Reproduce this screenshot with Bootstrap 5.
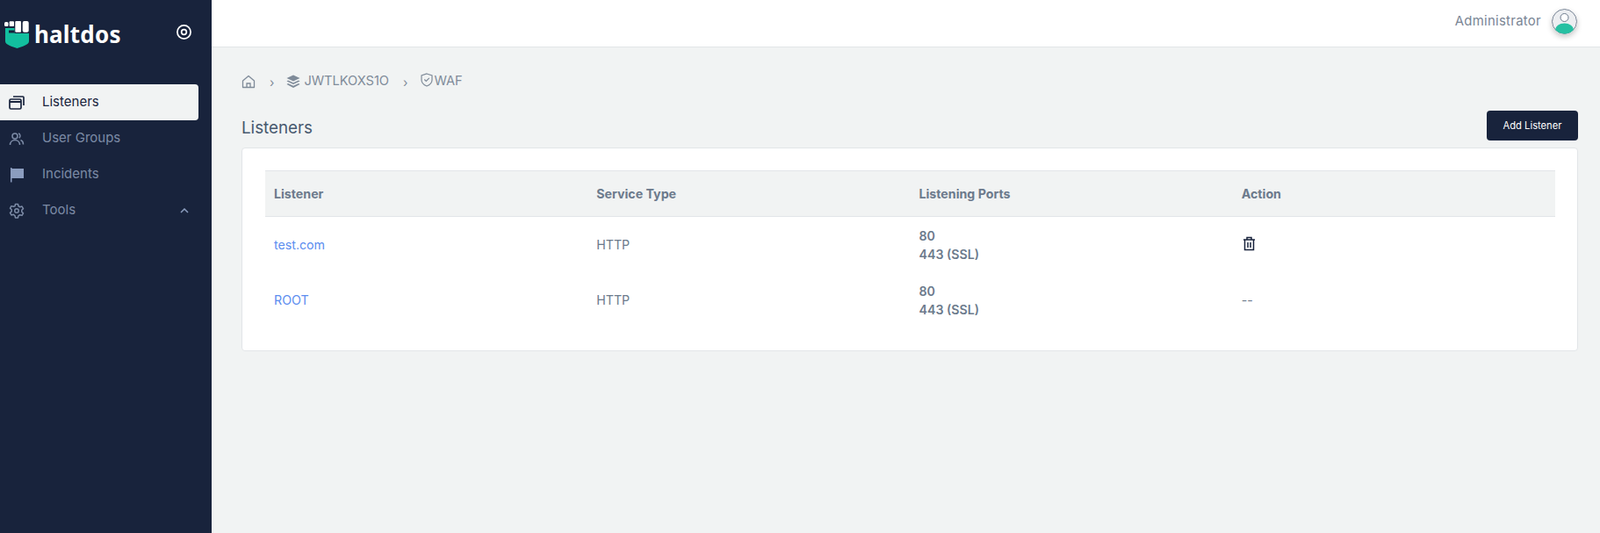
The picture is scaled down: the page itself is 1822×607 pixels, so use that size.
<!DOCTYPE html>
<html lang="en">
<head>
<meta charset="utf-8">
<title>Listeners</title>
<link href="https://cdn.jsdelivr.net/npm/bootstrap@5.3.0/dist/css/bootstrap.min.css" rel="stylesheet">
<style>
html,body{height:100%}
body{font-family:"Inter","Noto Sans",sans-serif;font-size:14.2px;background:#f1f3f3;color:#6c7a8c;overflow:hidden}
.shell{height:607px}
.side{width:241px;background:#18233c;flex:none}
.brand{height:96px;padding:23px 22px 0 5px}
.brand-name{font-family:"Noto Sans",sans-serif;font-weight:700;font-size:26px;line-height:32px;color:#fff;margin-left:5px;letter-spacing:.2px}
.side-item{height:41px;width:226px;padding-left:10px;color:#7c8ba6;font-size:15px;text-decoration:none;border-radius:0 4px 4px 0}
.side-item.on{background:#f1f3f3;color:#18233c}
.side-ico{width:18px;margin-right:20px;flex:none}
.caret-up{margin-right:11px}
.topline{height:54px;background:#fff;border-bottom:1px solid #e2e5e8;padding:0 26px 4px 0}
.admin{font-size:14.9px;color:#7a8594;margin:0 12px 0 0;letter-spacing:.3px}
.avatar{border-radius:50%;box-shadow:0 3px 6px rgba(0,0,0,.22)}
.pagearea{padding:0 25px 0 34px}
.crumbs{height:37px;margin-top:20px;font-size:14.6px;color:#7f8b99;padding-top:1px}
.crumb-sep{margin:0 14px 0 16px;font-size:14px}
.heading-row{margin-top:15px;height:42px}
.page-title{font-size:18.8px;color:#48596f;font-weight:400;margin:7px 0 0;line-height:25px}
.btn-add{background:#18233c;color:#fff;font-size:11.2px;border-radius:4px;width:104px;height:34px;padding:0;border:0}
.btn-add:hover{background:#18233c;color:#fff}
.panel{background:#fff;border:1px solid #e2e5e8;border-radius:4px;padding:25px 25px 26px 26px}
.grid-table{table-layout:fixed;margin:0;font-size:14.2px;--bs-table-color:#6c7a8c;--bs-table-border-color:transparent}
.grid-table th{background:#f1f3f3;color:#6c7a8c;font-weight:700;height:52px;padding:0 10px;border-top:1px solid #e2e5e8;border-bottom:1px solid #e2e5e8;vertical-align:middle}
.grid-table td{height:63px;padding:0 10px;vertical-align:middle;line-height:21px;color:#6c7a8c}
.grid-table td.ports{font-weight:600;padding-top:2px}
.grid-table a{color:#5b8def;text-decoration:none}
.bin{display:block;margin:0 0 2px 1px}
</style>
</head>
<body>
<div class="shell d-flex">
  <aside class="side d-flex flex-column">
    <div class="brand d-flex align-items-start">
      <svg width="29" height="33" viewBox="0 0 29 33">
        <path d="M1 9H11.500V15H28V24C28 28 20 30 14.500 32 9 30 1 28 1 24Z" fill="#12bf9f"/>
        <rect x="5" y="11.500" width="6.500" height="3" fill="#18233c"/>
        <rect x="0" y="2" width="4.500" height="5" rx="1.500" fill="#fff"/><rect x="5.700" y="1.300" width="5.300" height="5.700" rx="1" fill="#fff"/><rect x="12.300" y="1" width="6.700" height="12.700" rx="1" fill="#fff"/><rect x="20.700" y="1" width="7" height="12.700" rx="2" fill="#fff"/>
      </svg>
      <span class="brand-name">haltdos</span>
      <svg class="ms-auto mt-1" width="19" height="19" viewBox="0 0 20 20" fill="none" stroke="#fff" stroke-width="1.800"><circle cx="10" cy="10" r="8"/><circle cx="10" cy="10" r="3"/></svg>
    </div>
    <a class="side-item on d-flex align-items-center" href="#">
      <svg class="side-ico" width="18" height="18" viewBox="0 0 18 18" fill="none" stroke="#18233c" stroke-width="1.700"><rect x="1" y="5" width="13" height="11" rx="1.500"/><path d="M1 8h13" stroke-width="2"/><path d="M5 2h11a1 1 0 0 1 1 1v9"/></svg>Listeners</a>
    <a class="side-item d-flex align-items-center" href="#">
      <svg class="side-ico" width="18" height="18" viewBox="0 0 18 18" fill="none" stroke="#7c8ba6" stroke-width="1.500"><circle cx="7" cy="6" r="3"/><path d="M1.500 16c0-3.500 2.500-5.500 5.500-5.500s5.500 2 5.500 5.500"/><path d="M11 3c2 .3 2.800 3.500.8 5.200M13.500 10.500c2 .8 3 2.800 3 5"/></svg>User Groups</a>
    <a class="side-item d-flex align-items-center" href="#">
      <svg class="side-ico" width="18" height="18" viewBox="0 0 18 18"><path d="M2 1h1.500v1H17v11H3.500v4.500H2z" fill="#8b9dbf"/></svg>Incidents</a>
    <a class="side-item d-flex align-items-center" href="#">
      <svg class="side-ico" width="18" height="18" viewBox="0 0 24 24" fill="none" stroke="#7c8ba6" stroke-width="2" stroke-linejoin="round"><circle cx="12" cy="12" r="3"/><path d="M10 2h4l.7 3 2.300 1.300 3-.9 2 3.400-2.300 2.200v2.600l2.300 2.200-2 3.400-3-.9-2.300 1.300-.7 3h-4l-.7-3L7 17.700l-3 .9-2-3.400 2.300-2.200v-2.600L2 8.200l2-3.400 3 .9L9.300 5z"/></svg>Tools
      <svg class="ms-auto caret-up" width="10" height="6" viewBox="0 0 10 6" fill="none" stroke="#8b9dbf" stroke-width="1.500"><path d="M1 5l4-4 4 4"/></svg></a>
  </aside>
  <div class="flex-grow-1 d-flex flex-column">
    <header class="topline d-flex align-items-center justify-content-end">
      <span class="admin">Administrator</span>
      <svg class="avatar" width="29" height="29" viewBox="0 0 29 29"><defs><clipPath id="av"><circle cx="14.500" cy="14.500" r="14"/></clipPath></defs><circle cx="14.500" cy="14.500" r="14" fill="#eceef1" stroke="#6c7a8c"/><g clip-path="url(#av)"><ellipse cx="14.500" cy="24" rx="10.500" ry="7.500" fill="#26c0a2"/></g><circle cx="14.500" cy="10" r="4.500" fill="#fff" stroke="#6c7a8c"/></svg>
    </header>
    <main class="pagearea flex-grow-1">
      <nav class="crumbs d-flex align-items-center">
        <svg width="16" height="16" viewBox="0 0 16 16" fill="none" stroke="#7f8b99" stroke-width="1.300"><path d="M1.500 7 8 1.500 14.500 7v7.500h-13z" stroke-linejoin="round"/><path d="M6 14.500V10h4v4.500"/></svg>
        <span class="crumb-sep">›</span>
        <svg class="me-1" width="16" height="16" viewBox="0 0 16 16" fill="#7f8b99"><path d="M8 .5 15.500 4 8 7.500.5 4z"/><path d="M2 6.500 8 9.300 14 6.500 15.500 7.500 8 11 .5 7.500z"/><path d="M2 10 8 12.800 14 10 15.500 11 8 15 .5 11z"/></svg>
        <span>JWTLKOXS1O</span>
        <span class="crumb-sep">›</span>
        <svg class="mb-1" width="16" height="16" viewBox="0 0 16 16" fill="none" stroke="#7f8b99" stroke-width="1.200"><path d="M8 1l6 2v5c0 3.500-3 5.800-6 7-3-1.200-6-3.500-6-7V3z"/><path d="M5.300 7.500 7.300 9.500 10.800 5.800"/></svg>
        <span>WAF</span>
      </nav>
      <div class="heading-row d-flex align-items-start justify-content-between">
        <h1 class="page-title">Listeners</h1>
        <button class="btn btn-add" type="button">Add Listener</button>
      </div>
      <section class="panel">
        <table class="table grid-table">
          <thead><tr><th>Listener</th><th>Service Type</th><th>Listening Ports</th><th>Action</th></tr></thead>
          <tbody>
            <tr><td><a href="#">test.com</a></td><td>HTTP</td><td class="ports">80<br>443 (SSL)</td><td><svg class="bin" width="15" height="17" viewBox="0 0 15 17" fill="none" stroke="#18233c" stroke-width="1.500"><path d="M1 4h13M5 4V1.500h5V4M2.500 4v11.500h10V4M6 7v6M9 7v6"/></svg></td></tr>
            <tr><td><a href="#">ROOT</a></td><td>HTTP</td><td class="ports">80<br>443 (SSL)</td><td>--</td></tr>
          </tbody>
        </table>
      </section>
    </main>
  </div>
</div>
<script src="https://cdn.jsdelivr.net/npm/bootstrap@5.3.0/dist/js/bootstrap.bundle.min.js"></script>
</body>
</html>
